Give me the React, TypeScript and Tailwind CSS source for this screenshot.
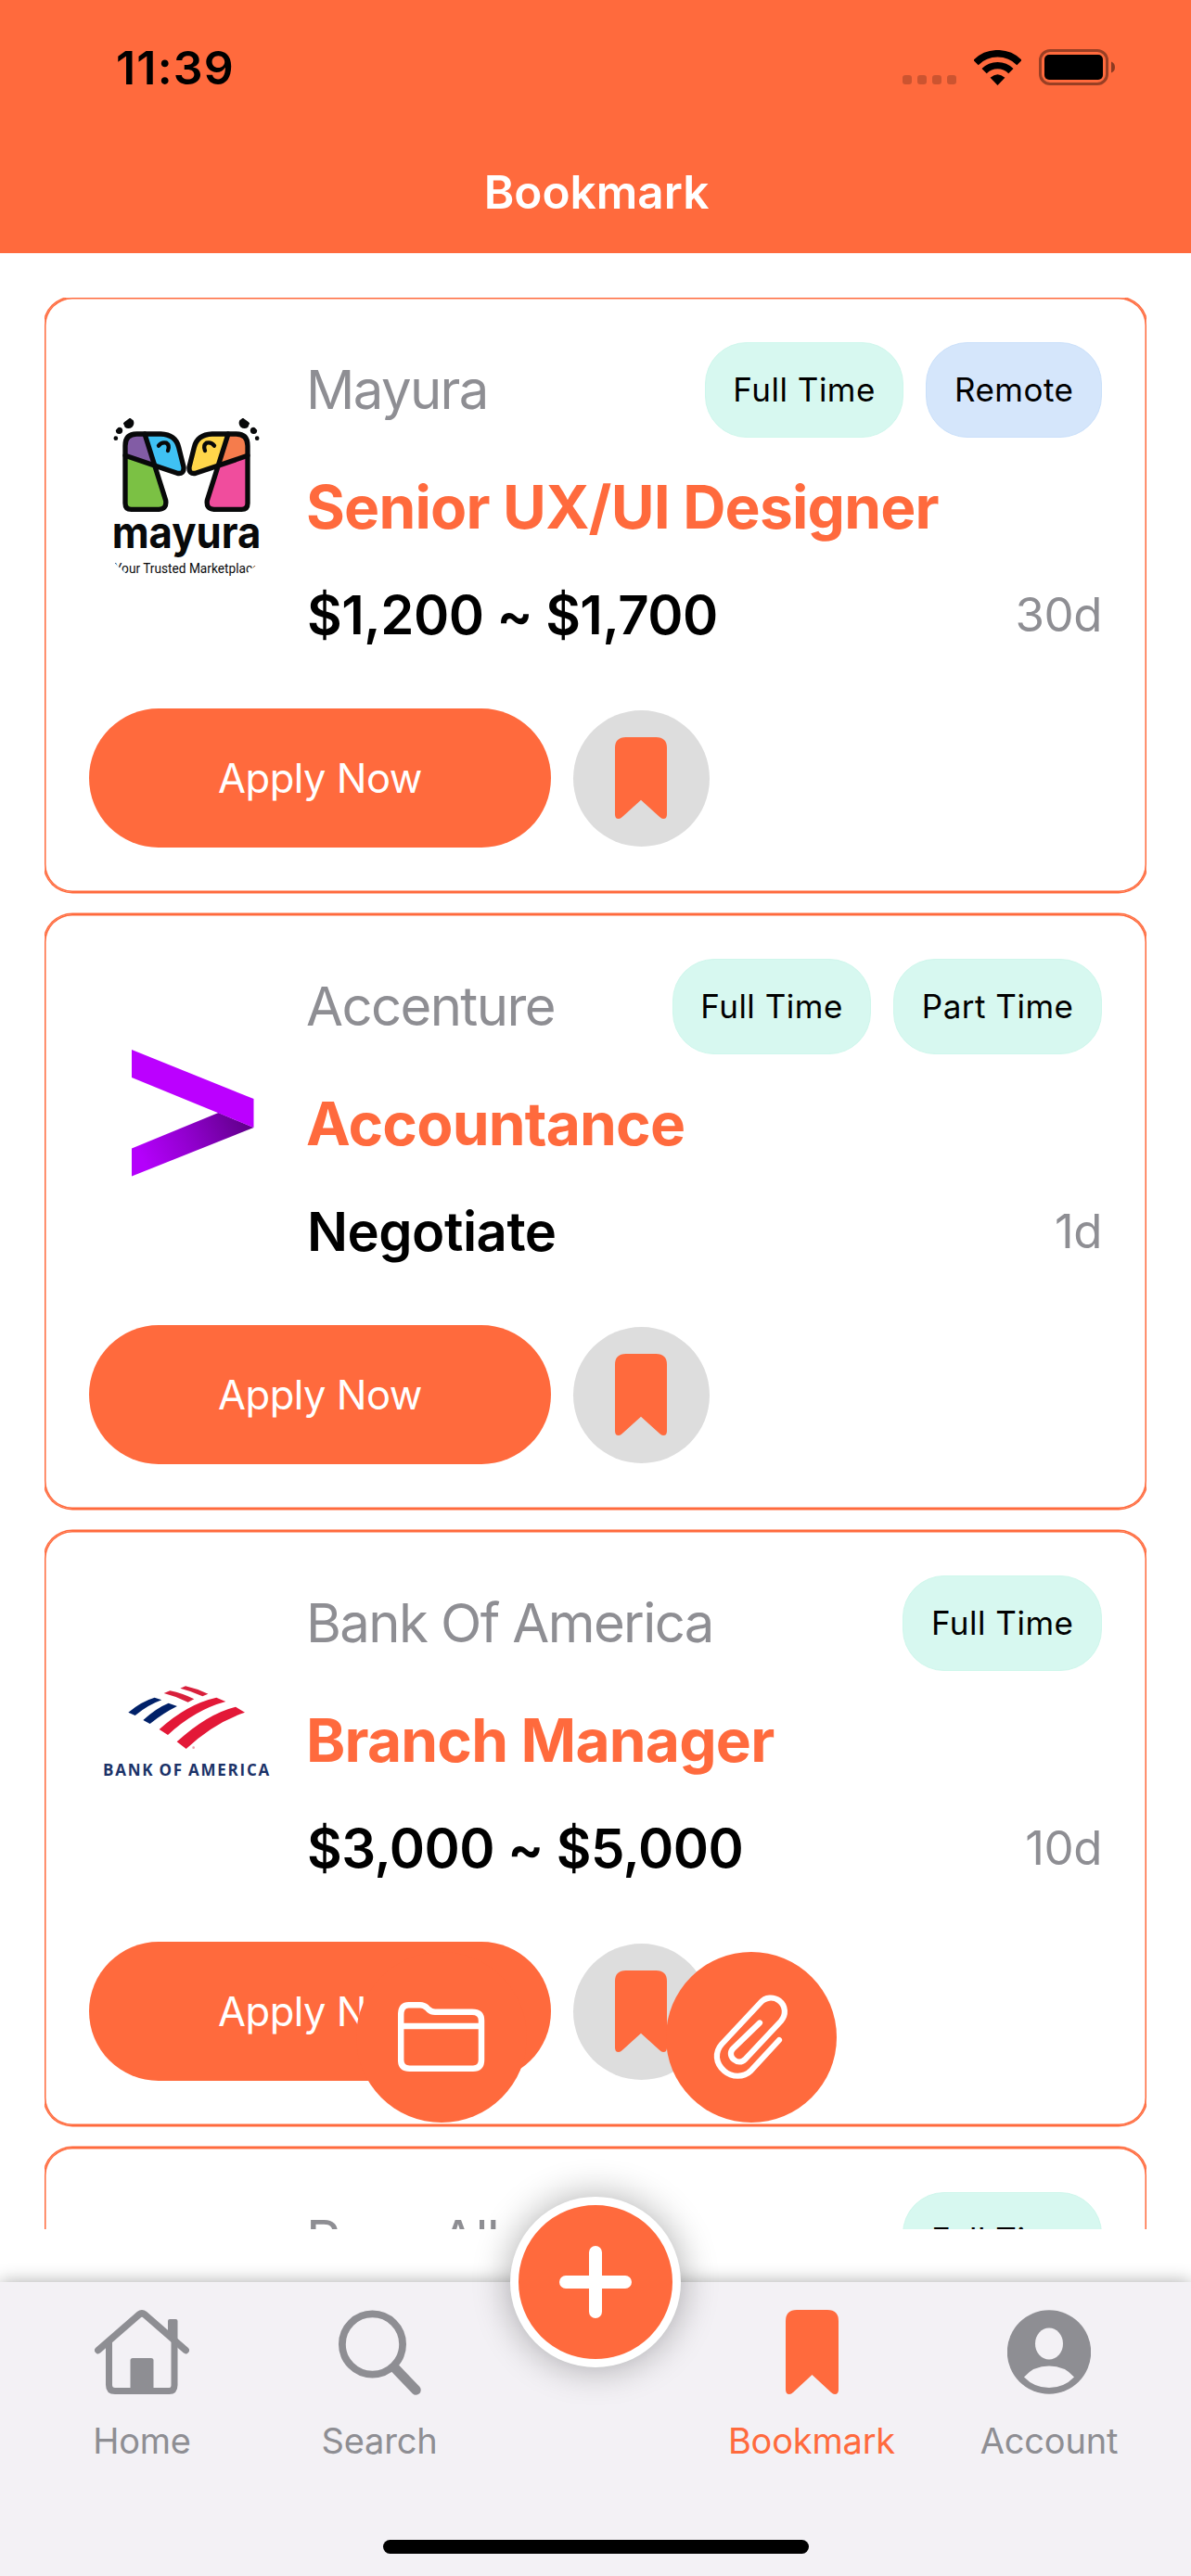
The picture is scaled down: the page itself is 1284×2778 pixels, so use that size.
import type { ReactNode } from 'react';

type Job = {
  company: string;
  title: string;
  salary: string;
  age: string;
  tags: string[];
  logo: ReactNode;
};

function MayuraHalf({ inner, outer, body }: { inner: string; outer: string; body: string }) {
  return (
    <g>
      <path d="M135 187V155Q135 117 172 117H198L230 218Z" fill={outer} />
      <path d="M198 117H250Q298 119 308 160L324 224Q326 248 303 244L230 218Z" fill={inner} />
      <path d="M135 187L230 218L266 332Q270 360 244 361H155Q135 361 135 341Z" fill={body} />
      <g fill="none" stroke="#08090a" strokeWidth="16" strokeLinecap="round" strokeLinejoin="round">
        <path d="M135 187V155Q135 117 172 117H250Q298 119 308 160L324 224Q326 248 303 244L135 187Z" />
        <path d="M198 117L266 332Q270 360 244 361H155Q135 361 135 341V187" />
        <path d="M243 155Q253 142 268 146Q280 154 273 171" strokeWidth="13" />
      </g>
      <path d="M132 76L146 66Q153 64 156 70Q164 72 163 84Q160 99 145 99Q132 97 132 89Q126 82 132 76Z" fill="#08090a" />
      <circle cx="115.500" cy="106" r="11" fill="#08090a" />
      <circle cx="104.500" cy="131" r="7" fill="#08090a" />
    </g>
  );
}

function MayuraLogo() {
  return (
    <svg viewBox="18 6 630 630" className="size-[210px]">
      <defs>
        <clipPath id="mayura-clip">
          <circle cx="333" cy="321" r="315" />
        </clipPath>
      </defs>
      <g clipPath="url(#mayura-clip)">
        <MayuraHalf outer="#825ca5" inner="#3fc1f3" body="#7bc144" />
        <g transform="translate(666 0) scale(-1 1)">
          <MayuraHalf outer="#f57c4c" inner="#ffd64a" body="#f04d9d" />
        </g>
        <text x="92" y="487" textLength="482" lengthAdjust="spacingAndGlyphs" fontFamily="Inter, sans-serif" fontWeight="700" fontSize="140" fill="#08090a">
          mayura
        </text>
        <text x="100" y="567" textLength="468" lengthAdjust="spacingAndGlyphs" fontFamily="Roboto, sans-serif" fontSize="43" fill="#08090a">
          Your Trusted Marketplace
        </text>
      </g>
    </svg>
  );
}

function AccentureLogo() {
  return (
    <svg viewBox="0 0 210 210" className="size-[210px]">
      <defs>
        <linearGradient id="fold" gradientUnits="userSpaceOnUse" x1="60" y1="160" x2="165" y2="112">
          <stop offset="0" stopColor="#b400fb" />
          <stop offset="0.500" stopColor="#8f00cb" />
          <stop offset="1" stopColor="#64008f" />
        </linearGradient>
      </defs>
      <path d="M139.500 104L46 142.500V172.500L177.500 120Z" fill="url(#fold)" />
      <path d="M46 36L177.500 89V120L46 66Z" fill="#bb00ff" />
    </svg>
  );
}

function BankLogo() {
  return (
    <svg viewBox="0 0 210 210" className="size-[210px]">
      <g transform="translate(4 29) scale(0.3333)">
        <path d="M115 170Q158 134 200 122L223 130Q180 145 137 180Z" fill="#012169" />
        <path d="M163 195Q205 156 245 140L273 150Q228 172 185 207Z" fill="#012169" />
        <path d="M230 108L250 100Q290 108 328 127L308 137Q270 118 230 108Z" fill="#d8203c" />
        <path d="M283 92L300 85Q340 94 373 110L355 118Q320 101 283 92Z" fill="#d8203c" />
        <path d="M215 225Q305 143 400 122L430 135Q330 162 243 243Z" fill="#e31837" />
        <path d="M272 265Q370 175 462 152L492 170Q390 205 302 288Z" fill="#e31837" />
        <circle cx="326" cy="284" r="4" fill="#eba3ae" />
        <text x="33" y="374" textLength="538" lengthAdjust="spacing" fontFamily="'Open Sans', sans-serif" fontWeight="700" fontSize="51" wordSpacing="-3" fill="#1b3268">
          BANK OF AMERICA
        </text>
      </g>
    </svg>
  );
}

const jobs: Job[] = [
  { company: 'Mayura', title: 'Senior UX/UI Designer', salary: '$1,200 ~ $1,700', age: '30d', tags: ['Full Time', 'Remote'], logo: <MayuraLogo /> },
  { company: 'Accenture', title: 'Accountance', salary: 'Negotiate', age: '1d', tags: ['Full Time', 'Part Time'], logo: <AccentureLogo /> },
  { company: 'Bank Of America', title: 'Branch Manager', salary: '$3,000 ~ $5,000', age: '10d', tags: ['Full Time'], logo: <BankLogo /> },
];

function BookmarkIcon({ className }: { className: string }) {
  return (
    <svg viewBox="0 0 57 91" preserveAspectRatio="none" className={className} fill="#ff6a3d">
      <path d="M0 12Q0 0 12 0H45Q57 0 57 12V86Q57 91 53 91Q51 91 49 89L28.500 70L8 89Q6 91 4 91Q0 91 0 86Z" />
    </svg>
  );
}

function Tag({ label }: { label: string }) {
  const tone = label === 'Remote' ? 'bg-[#d5e6fb] border-[#cae0fa]' : 'bg-[#d7f8f0] border-[#cff7ec]';
  return (
    <span className={`flex h-[103px] items-center rounded-[45px] border px-[29.5px] text-[35px] leading-none tracking-[0.5px] text-black ${tone}`}>
      {label}
    </span>
  );
}

function JobCard({ job }: { job: Job }) {
  return (
    <article className="h-[641px] shrink-0 rounded-[30px] p-12 shadow-[0_0_0_1.5px_#ff6a3d,inset_0_0_0_1.5px_#ff6a3d]">
      <div className="flex items-center gap-6">
        <div className="mt-1 size-[210px] shrink-0">{job.logo}</div>
        <div className="flex grow flex-col">
          <div className="flex h-[103px] items-center justify-between">
            <span className="mb-px whitespace-nowrap text-[58px] leading-none tracking-[-1.6px] text-[#8e8e93]">{job.company}</span>
            <div className="flex gap-6">
              {job.tags.map((t) => (
                <Tag key={t} label={t} />
              ))}
            </div>
          </div>
          <h2 className="mt-[35px] h-20 whitespace-nowrap text-[64px] leading-[80px] font-bold tracking-[-0.8px] text-[#ff6a3d]">{job.title}</h2>
          <div className="mt-10 flex h-[72px] items-center justify-between">
            <span className="mb-px ml-px text-[58px] leading-none font-semibold tracking-[-0.5px] text-black">{job.salary}</span>
            <span className="mb-px text-[51px] leading-none tracking-[-0.5px] text-[#8e8e93]">{job.age}</span>
          </div>
        </div>
      </div>
      <div className="mt-[65px] flex items-center gap-6">
        <button className="h-[150px] w-[498px] rounded-full bg-[#ff6a3d] pt-px text-[43.5px] leading-none tracking-[-0.5px] text-white">Apply Now</button>
        <button className="flex size-[147px] items-center justify-center rounded-full bg-[#dddddd]">
          <BookmarkIcon className="mr-px h-[88px] w-14" />
        </button>
      </div>
    </article>
  );
}

function StatusBar() {
  return (
    <div className="flex h-[145px] items-center justify-between pr-[80px] pl-[125px]">
      <span className="text-[50px] leading-none font-semibold tracking-[1.2px] text-black">11:39</span>
      <div className="flex items-center">
        <div className="mt-[27px] flex gap-1.5">
          <i className="size-2.5 rounded-[3px] bg-black/20" />
          <i className="size-2.5 rounded-[3px] bg-black/20" />
          <i className="size-2.5 rounded-[3px] bg-black/20" />
          <i className="size-2.5 rounded-[3px] bg-black/20" />
        </div>
        <svg viewBox="0 0 51 38" className="ml-[19px] h-[38px] w-[51px]" fill="none" stroke="#000">
          <path d="M2 13.500A33.200 33.200 0 0 1 49 13.500" strokeWidth="7.600" />
          <path d="M11.100 22.600A20.400 20.400 0 0 1 39.900 22.600" strokeWidth="7.400" />
          <path d="M25.500 38L17.600 29.800Q25.500 22.500 33.400 29.800Z" fill="#000" stroke="none" />
        </svg>
        <svg viewBox="0 0 84 39" className="ml-[19px] h-[39px] w-[84px]">
          <rect x="1.500" y="1.500" width="72" height="36" rx="10.500" fill="none" stroke="#000" strokeOpacity="0.400" strokeWidth="3" />
          <rect x="6" y="6" width="63" height="27" rx="5" fill="#000" />
          <path d="M78 13.500Q82 15 82 19.500Q82 24 78 25.500Z" fill="#000" fillOpacity="0.450" />
        </svg>
      </div>
    </div>
  );
}

function HomeIcon() {
  return (
    <svg viewBox="0 0 102 91" className="h-[91px] w-[102px]" fill="none" stroke="#8e8e93" strokeLinecap="round" strokeLinejoin="round">
      <path d="M3.800 43.500L48 5Q51 2.800 54 5L98.200 43.500" strokeWidth="7.500" />
      <path d="M15.500 35V81Q15.500 87.500 22 87.500H80.500Q86 87.500 86 81V35" strokeWidth="7" />
      <path d="M79 28V12Q79 10 81 10H87.500Q89.500 10 89.500 12V37Z" fill="#8e8e93" stroke="none" />
      <path d="M38.500 88V54.500Q38.500 52 41 52H61Q63.500 52 63.500 54.500V88Z" fill="#8e8e93" stroke="none" />
    </svg>
  );
}

function SearchIcon() {
  return (
    <svg viewBox="0 0 89 92" className="h-[92px] w-[89px]" fill="none" stroke="#8e8e93" strokeLinecap="round">
      <circle cx="36.500" cy="37" r="32.600" strokeWidth="7.800" />
      <path d="M60.500 62.500L83.500 86.500" strokeWidth="10.500" />
    </svg>
  );
}

function AccountIcon() {
  return (
    <svg viewBox="0 0 90 91" className="h-[91px] w-[90px]">
      <circle cx="45" cy="45.500" r="45.200" fill="#8e8e93" />
      <ellipse cx="45" cy="36.500" rx="15" ry="17" fill="#f3f1f5" />
      <path d="M18 72.500Q28 60.500 45 60.500Q62 60.500 72 72.500Q61 84 45 84Q29 84 18 72.500Z" fill="#f3f1f5" />
    </svg>
  );
}

function Tab({ icon, label, active }: { icon: ReactNode; label: string; active?: boolean }) {
  return (
    <div className={`flex flex-col items-center pt-[30px] ${active ? 'text-[#ff6a3d]' : 'text-[#8e8e93]'}`}>
      <div className="h-[91px]">{icon}</div>
      <span className="mt-[31px] text-[38px] leading-[38px] tracking-[-0.2px]">{label}</span>
    </div>
  );
}

export default function App() {
  return (
    <div className="relative flex h-[2778px] w-[1284px] flex-col overflow-hidden bg-white font-['Inter',sans-serif]">
      <header className="h-[273px] shrink-0 bg-[#ff6a3d]">
        <StatusBar />
        <h1 className="flex h-[126px] items-center justify-center pl-0.5 text-[49.5px] leading-none font-semibold text-white">Bookmark</h1>
      </header>

      <main className="mx-12 mt-12 flex h-[2083px] shrink-0 flex-col gap-6 overflow-hidden">
        {jobs.map((job) => (
          <JobCard key={job.company} job={job} />
        ))}
        <JobCard job={{ company: 'Rose All', title: '', salary: '', age: '', tags: ['Full Time'], logo: null }} />
      </main>

      <nav className="mt-[57px] grid grow grid-cols-[256px_256px_210px_256px_256px] content-start bg-[#f3f1f5] px-[25px] shadow-[0_0_18px_rgba(0,0,0,0.33)]">
        <Tab icon={<HomeIcon />} label="Home" />
        <Tab icon={<SearchIcon />} label="Search" />
        <span />
        <Tab icon={<BookmarkIcon className="h-[91px] w-[57px]" />} label="Bookmark" active />
        <Tab icon={<AccountIcon />} label="Account" />
      </nav>

      <div className="absolute top-[2105px] left-[383.5px] flex gap-[150px]">
        <button className="flex size-[184px] items-center justify-center rounded-full bg-[#ff6a3d]">
          <svg viewBox="0 0 94 76" className="h-[76px] w-[94px]" fill="none" stroke="#fff" strokeWidth="6.500">
            <path d="M3.200 14Q3.200 3.300 11.500 3.300H24Q28 3.300 31 6L33 8Q36 10.700 40 10.800H80Q90 10.800 90 20V62.500Q90 71.700 81 71.700H12.500Q3.200 71.700 3.200 62.500ZM3.200 26H90" />
          </svg>
        </button>
        <button className="flex size-[184px] items-center justify-center rounded-full bg-[#ff6a3d]">
          <svg viewBox="0 0 86 96" className="h-[96px] w-[86px]" fill="none" stroke="#fff" strokeWidth="6.200" strokeLinecap="round">
            <path d="M73 51L42 84.500C35 91.500 22 91.500 14 84.500C4 76 3.500 64 11 55.500L53 10.500C58 4.500 67 4 73 8.500C80.500 14.500 80.500 24 75 30.500L36 72C32.500 75.500 27.500 75 24 72C20 68.500 20 63.500 23.500 60L52 32.500" />
          </svg>
        </button>
      </div>

      <button className="absolute top-[2369px] left-[550px] flex size-[184px] items-center justify-center rounded-full border-[9px] border-white bg-[#ff6a3d] shadow-[0_0_40px_rgba(0,0,0,0.33)]">
        <svg viewBox="0 0 78 78" className="size-[78px]" stroke="#fff" strokeWidth="14" strokeLinecap="round">
          <path d="M39 7V71M7 39H71" />
        </svg>
      </button>

      <div className="absolute top-[2739px] left-[413px] h-[15px] w-[459px] rounded-full bg-black" />
    </div>
  );
}
